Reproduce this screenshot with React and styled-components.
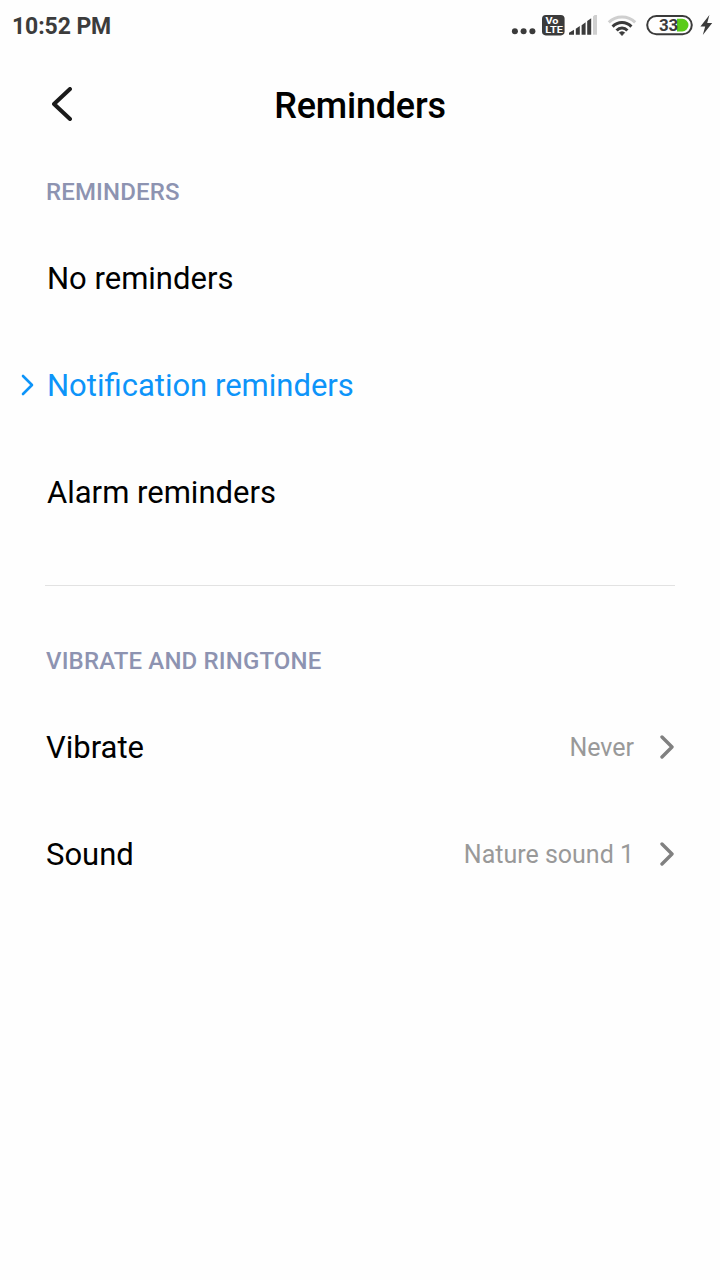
import React from "react";
import styled, { createGlobalStyle } from "styled-components";

const GlobalStyle = createGlobalStyle`
  * { box-sizing: border-box; }
  body { margin: 0; background: #fefefe; font-family: Roboto, "Liberation Sans", sans-serif; }
`;

const Screen = styled.div`
  width: 720px;
  height: 1280px;
  background: #fefefe;
  overflow: hidden;
`;

const StatusBar = styled.div`
  height: 52px;
  padding: 0 7px 0 12px;
  display: flex;
  align-items: center;
  justify-content: space-between;
`;

const Clock = styled.div`
  padding-top: 2px;
  font-size: 23px;
  line-height: 50px;
  font-weight: 700;
  color: #3c3c3c;
  letter-spacing: -0.1px;
`;

const StatusIcons = styled.div`
  display: flex;
  height: 52px;

  svg { display: block; }
`;

const Header = styled.header`
  height: 107px;
  display: grid;
  grid-template-columns: 100px 1fr 100px;
  align-items: center;
`;

const BackButton = styled.button`
  border: 0;
  padding: 0 0 3px 52px;
  background: none;
  height: 40px;
  display: flex;
  align-items: center;
`;

const Title = styled.h1`
  margin: 0;
  font-size: 36px;
  line-height: 44px;
  font-weight: 500;
  letter-spacing: -0.2px;
  text-align: center;
  color: #000;
`;

const Section = styled.section`
  padding: 0 46px;
`;

const SectionTitle = styled.h2`
  margin: 0;
  height: 65px;
  font-size: 24px;
  line-height: 67px;
  font-weight: 500;
  letter-spacing: 0.15px;
  color: #8d93b1;
`;

const Row = styled.div`
  height: 107px;
  display: flex;
  align-items: center;
  font-size: 31px;
  line-height: 40px;
  color: ${(p) => (p.$selected ? "#0d94f9" : "#000")};
`;

const Marker = styled.span`
  display: flex;
  width: 14px;
  margin-left: -25px;
  margin-right: 11px;
`;

const Label = styled.span`
  flex: 1;
  padding-top: 2px;
  padding-left: ${(p) => (p.$inset ? "1px" : "0")};
`;

const Value = styled.span`
  padding-top: 2px;
  font-size: 25px;
  color: #999;
  margin-right: 26px;
`;

const Divider = styled.hr`
  height: 1px;
  margin: 40px 45px 42px;
  border: 0;
  background: #e2e2e2;
`;

const Chevron = ({ width, height, stroke, color, left }) => (
  <svg width={width} height={height} viewBox={`0 0 ${width} ${height}`} fill="none">
    <path
      d={
        left
          ? `M${width - 2} 2L2 ${height / 2}L${width - 2} ${height - 2}`
          : `M2 2L${width - 2} ${height / 2}L2 ${height - 2}`
      }
      stroke={color}
      strokeWidth={stroke}
      strokeLinecap="round"
      strokeLinejoin="round"
    />
  </svg>
);

const StatusGlyphs = () => (
  <svg width="203" height="52" viewBox="510 0 203 52" fontFamily="Roboto, sans-serif">
    <g fill="#3b3b3b">
      <circle cx="514.9" cy="31.3" r="3" />
      <circle cx="523.6" cy="31.3" r="3" />
      <circle cx="532.4" cy="31.3" r="3" />
      <rect x="542" y="15" width="22.6" height="20.4" rx="3.8" />
      <path d="M569 34.8V32.8L574 29.8V34.8ZM575.8 34.8V28.8L579.8 26V34.8ZM581.6 34.8V25.2L585.6 22.2V34.8ZM587.2 34.8V21L591.2 18.2V34.8Z" />
    </g>
    <path d="M593 34.8V16.6L594.6 15H597V34.8Z" fill="#cfcfcf" />
    <text x="545.4" y="24.1" fontSize="8.4" fontWeight="700" fill="#fff" textLength="13" lengthAdjust="spacingAndGlyphs">Vo</text>
    <text x="545.2" y="33" fontSize="9.2" fontWeight="700" fill="#fff" textLength="17.6" lengthAdjust="spacingAndGlyphs">LTE</text>

    <g fill="none" stroke="#3b3b3b" strokeWidth="3">
      <path d="M608.8 22.4C616 15.2 628 15.2 635.2 22.4" stroke="#cfcfcf" />
      <path d="M612.6 26.6C617.8 21.2 626.2 21.2 631.4 26.6" />
      <path d="M616.6 30.6C619.6 27.2 624.4 27.2 627.4 30.6" />
    </g>
    <path d="M619.2 32.6Q622 30.4 624.8 32.6L622 35.7Z" fill="#3b3b3b" stroke="#3b3b3b" strokeWidth="0.5" strokeLinejoin="round" />

    <path d="M677 18.8H682.2A6.3 6.3 0 0 1 682.2 31.4H677Z" fill="#5acb19" />
    <rect x="647.2" y="15.9" width="44.6" height="18.4" rx="9.2" fill="none" stroke="#3b3b3b" strokeWidth="2" />
    <text x="658.9" y="30.9" fontSize="17" fontWeight="700" fill="#3b3b3b" textLength="19.4" lengthAdjust="spacingAndGlyphs">33</text>
    <path d="M709.4 15L700.4 26.6H705.2L702.8 35L712.2 23H707.2Z" fill="#3b3b3b" />
  </svg>
);

const choices = ["No reminders", "Notification reminders", "Alarm reminders"];
const settings = [
  { label: "Vibrate", value: "Never" },
  { label: "Sound", value: "Nature sound 1" },
];

export default function App() {
  return (
    <Screen>
      <GlobalStyle />
      <StatusBar>
        <Clock>10:52 PM</Clock>
        <StatusIcons><StatusGlyphs /></StatusIcons>
      </StatusBar>
      <Header>
        <BackButton aria-label="Back">
          <Chevron left width={20} height={34} stroke={4} color="#1a1a1a" />
        </BackButton>
        <Title>Reminders</Title>
      </Header>
      <Section>
        <SectionTitle>REMINDERS</SectionTitle>
        {choices.map((name, i) => (
          <Row key={name} $selected={i === 1}>
            {i === 1 && (
              <Marker><Chevron width={13} height={22} stroke={2.6} color="#0d94f9" /></Marker>
            )}
            <Label $inset>{name}</Label>
          </Row>
        ))}
      </Section>
      <Divider />
      <Section>
        <SectionTitle>VIBRATE AND RINGTONE</SectionTitle>
        {settings.map(({ label, value }) => (
          <Row key={label}>
            <Label>{label}</Label>
            <Value>{value}</Value>
            <Chevron width={14} height={24} stroke={3.4} color="#808080" />
          </Row>
        ))}
      </Section>
    </Screen>
  );
}
